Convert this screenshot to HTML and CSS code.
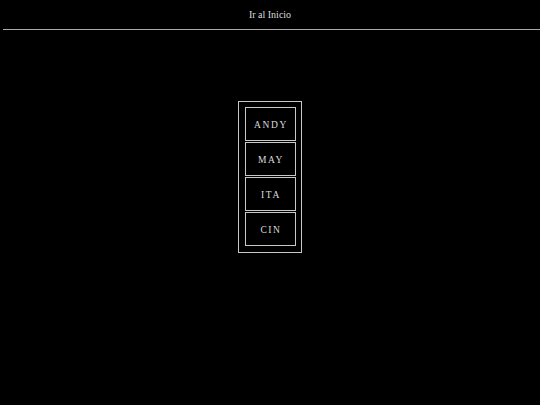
FILE: index.html
```html
<!DOCTYPE html>
<html>
<head>
<meta charset="utf-8">
<link rel="stylesheet" href="styles.css">
</head>
<body>
<header class="top">
  <a class="home" href="#">Ir al Inicio</a>
</header>
<hr class="rule">
<main class="stage">
  <nav class="frame">
    <div class="item">ANDY</div>
    <div class="item">MAY</div>
    <div class="item">ITA</div>
    <div class="item">CIN</div>
  </nav>
</main>
</body>
</html>
```
FILE: styles.css
```css
html, body {
  margin: 0;
  padding: 0;
  background: #000;
  height: 100%;
}
body {
  font-family: "Liberation Serif", "Times New Roman", serif;
  color: #ddd;
}
.top {
  height: 29px;
  display: flex;
  justify-content: center;
  align-items: flex-start;
  padding-top: 9px;
  box-sizing: border-box;
}
.home {
  font-size: 10px;
  line-height: 12px;
  color: #ddd;
  text-decoration: none;
}
.rule {
  margin: 0 0 0 3px;
  border: 0;
  border-top: 1px solid #aaa;
  height: 0;
}
.stage {
  display: flex;
  justify-content: center;
  padding-top: 71px;
}
.frame {
  display: flex;
  flex-direction: column;
  gap: 1px;
  border: 1px solid #c8c8c8;
  padding: 5px 5px 6px 6px;
}
.item {
  width: 48px;
  height: 31px;
  border: 1px solid #c8c8c8;
  display: flex;
  align-items: center;
  justify-content: center;
  font-size: 9.5px;
  letter-spacing: 1.6px;
  padding: 1px 0 0 1px;
  box-sizing: content-box;
  color: #ddd;
}
```
